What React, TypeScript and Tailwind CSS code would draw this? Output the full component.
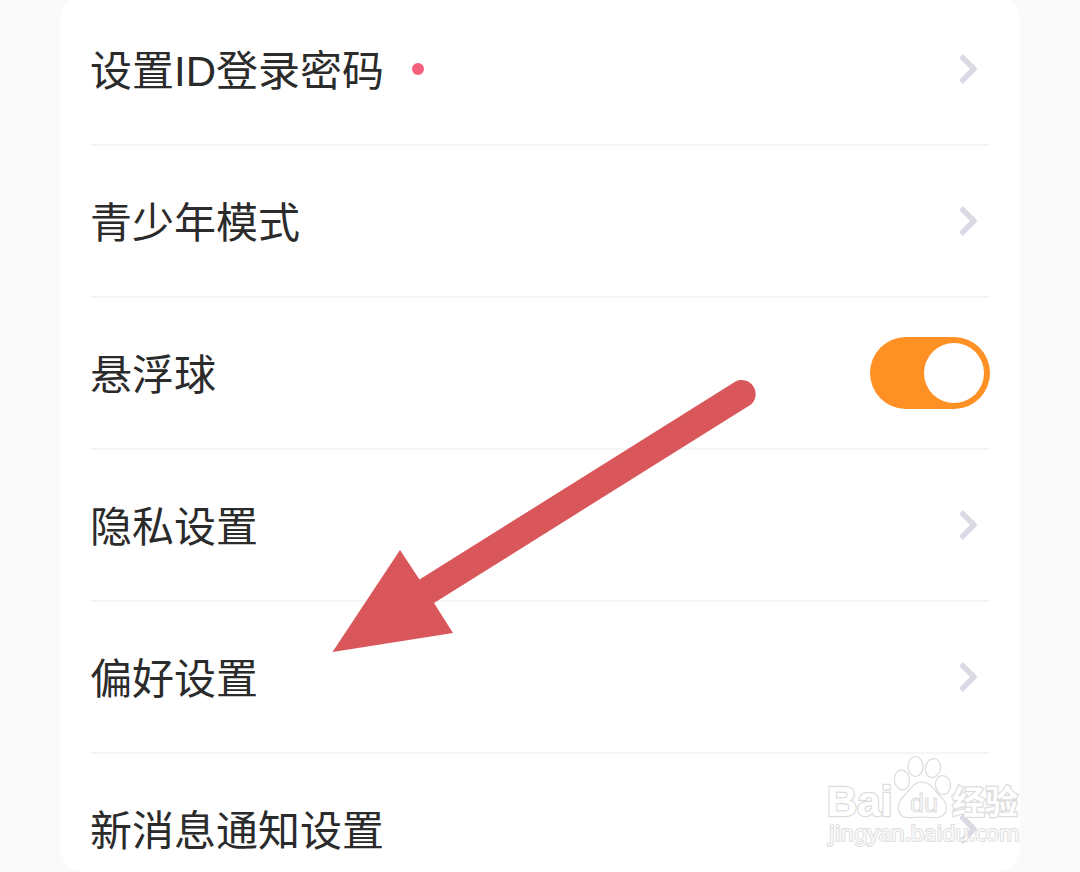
import { useState } from "react";

type Item = {
  label: string;
  dot?: boolean;
  toggle?: boolean;
};

const items: Item[] = [
  { label: "设置ID登录密码", dot: true },
  { label: "青少年模式" },
  { label: "悬浮球", toggle: true },
  { label: "隐私设置" },
  { label: "偏好设置" },
  { label: "新消息通知设置" },
];

const rowClass = "flex w-full items-center justify-between text-left h-[62px]";

function Chevron() {
  return (
    <svg className="mr-3 h-8 w-[18px] shrink-0" viewBox="0 0 18 32" fill="none" aria-hidden="true">
      <path d="M1 3 14 16 1 29" stroke="#dad9e4" strokeWidth="5.500" strokeLinejoin="round" />
    </svg>
  );
}

// Pointer towards 偏好设置
function Arrow() {
  return (
    <svg
      className="pointer-events-none absolute left-[260px] top-[366px] h-[310px] w-[460px]"
      viewBox="0 0 460 310"
      aria-hidden="true"
    >
      <path
        d="M12.500 292 80 190 99.500 219.500 415.500 21.500A14 14 0 0 1 431 44.500L114 243 133 273Z"
        fill="#d9565b"
      />
    </svg>
  );
}

function Watermark() {
  return (
    <svg
      className="pointer-events-none absolute bottom-0 right-0 h-[132px] w-[200px] overflow-visible"
      viewBox="0 0 200 132"
      fill="#ffffff"
      stroke="#dcdcdc"
      strokeWidth="1.2"
      aria-hidden="true"
    >
      <g paintOrder="stroke" strokeWidth="2.500">
        <text x="7" y="76" fontSize="42" fontWeight="700" fontFamily="'Liberation Sans', sans-serif">
          Bai
        </text>
        <text x="132" y="74" fontSize="33" fontWeight="700" fontFamily="'Noto Sans CJK SC', sans-serif">
          经验
        </text>
      </g>
      <ellipse cx="82" cy="40" rx="7.500" ry="10" transform="rotate(-8 82 40)" />
      <ellipse cx="95.500" cy="26.500" rx="7.500" ry="10" />
      <ellipse cx="113" cy="28" rx="7.500" ry="9.500" transform="rotate(12 113 28)" />
      <ellipse cx="123" cy="45" rx="7.500" ry="9.500" transform="rotate(-8 123 45)" />
      <path d="M102 42C111 42 114 50 121 57C129 64 128 76 118 77.500C112 78 108 77 102 77C96 77 92 78 86 77.500C77 76 76 64 83 57C90 50 93 42 102 42Z" />
      <text
        x="90"
        y="72"
        fontSize="25"
        strokeWidth="1"
        fontFamily="'Liberation Sans', sans-serif"
      >
        du
      </text>
      <text
        x="9"
        y="101"
        fontSize="22"
        strokeWidth="2"
        stroke="#e0e0e0"
        fillOpacity="0.8"
        paintOrder="stroke"
        fontFamily="'Noto Sans', sans-serif"
      >
        jingyan.baidu.com
      </text>
    </svg>
  );
}

export default function App() {
  const [floating, setFloating] = useState(true);

  return (
    <div className="flow-root overflow-hidden bg-[#fafafa] font-['Liberation_Sans','Noto_Sans_CJK_SC',sans-serif] text-[42px] leading-[54px] text-[#2b2b2b]">
      <main className="relative mx-[60px] -mt-1.5 rounded-3xl bg-white">
        <ul className="px-[30px]">
          {items.map((item) => (
            <li
              key={item.label}
              className="border-b-2 border-[#f5f5f5] py-11 last:border-b-0 last:pb-3"
            >
              {item.toggle ? (
                <label className={rowClass}>
                  <span className="pt-1.5">{item.label}</span>
                  <input
                    type="checkbox"
                    role="switch"
                    checked={floating}
                    onChange={(e) => setFloating(e.target.checked)}
                    className="h-[72px] w-[120px] shrink-0 cursor-pointer appearance-none rounded-full bg-[#dddddd] p-1.5 before:block before:size-[60px] before:rounded-full before:bg-white before:transition-transform checked:bg-[#ff9023] checked:before:translate-x-12"
                  />
                </label>
              ) : (
                <button type="button" className={rowClass}>
                  <span className="flex items-center gap-7">
                    <span className="pt-1.5">{item.label}</span>
                    {item.dot && <span className="size-3 rounded-full bg-[#f4607c]" />}
                  </span>
                  <Chevron />
                </button>
              )}
            </li>
          ))}
        </ul>

        <Arrow />
        <Watermark />
      </main>
    </div>
  );
}
